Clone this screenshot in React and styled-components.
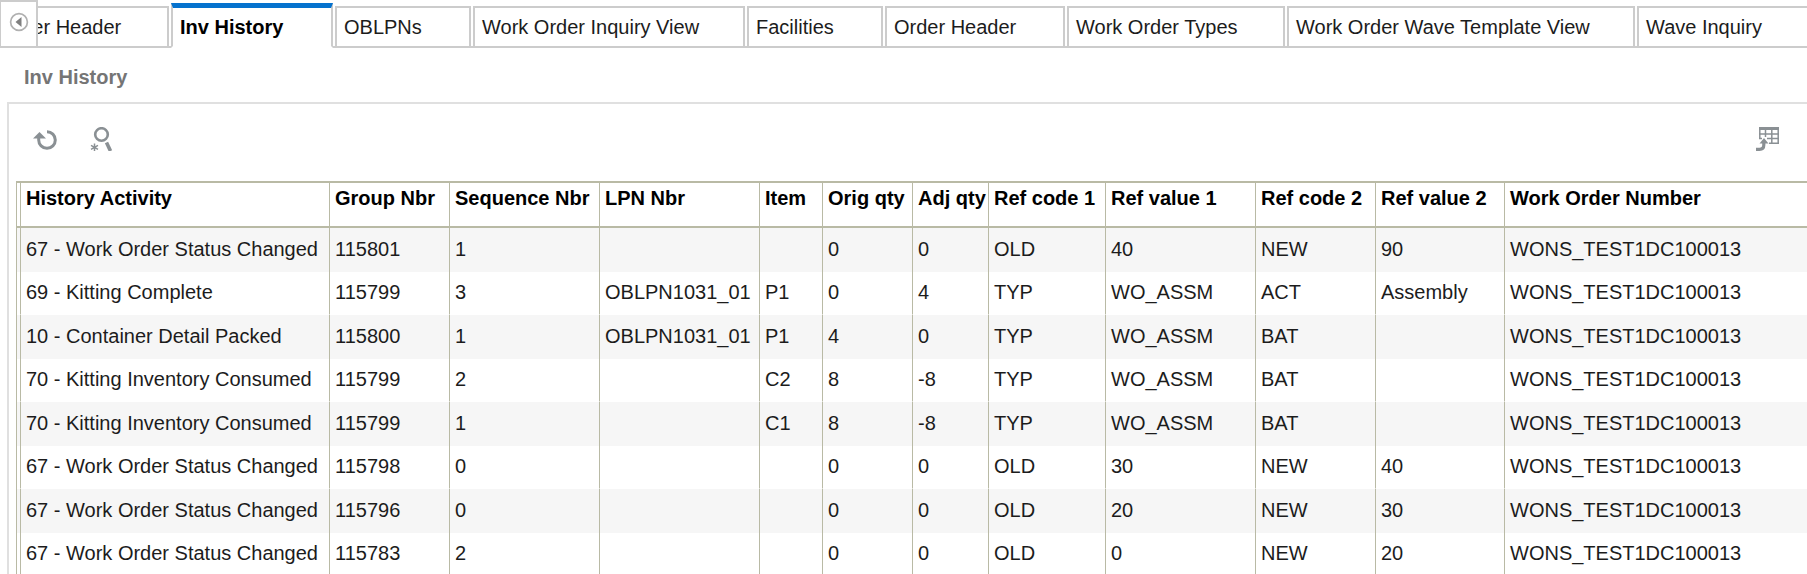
import React, {useState} from "react";
import styled, {createGlobalStyle} from "styled-components";

const GlobalStyle = createGlobalStyle`
  * {
    box-sizing: border-box;
  }

  body {
    margin: 0;
    background-color: #ffffff;
    color: #1c1c1c;
    font-family: "Liberation Sans", Arial, sans-serif;
    font-size: 20px;
  }
`;

const PageWrapper = styled.div`
  display: flex;
  flex-direction: column;
  height: 100vh;
  overflow: hidden;
`;

const TabBar = styled.div`
  display: flex;
  flex: none;
  height: 48px;
  box-shadow: inset 0 -2px #cccccc;
`;

const ScrollButton = styled.button`
  display: flex;
  flex: none;
  justify-content: center;
  width: 38px;
  padding: 10px 0 0;
  border: 2px solid #cccccc;
  border-left-width: 1px;
  background-color: #ffffff;
`;

const TabList = styled.div`
  display: flex;
  flex: 1;
  align-items: flex-end;
  gap: 2px;
  min-width: 0;
  overflow: hidden;
`;

const Tab = styled.button`
  flex: none;
  width: ${props => props.$width}px;
  height: ${props => props.$active ? 45 : 42}px;
  padding: 0 7px 1px;
  border: 2px solid #cccccc;
  border-top: ${props => props.$active ? "5px solid #0572ce" : "2px solid #cccccc"};
  border-bottom-color: ${props => props.$active ? "#ffffff" : "#cccccc"};
  background-color: #ffffff;
  color: ${props => props.$active ? "#000000" : "#1c1c1c"};
  font-family: inherit;
  font-size: 20px;
  font-weight: ${props => props.$active ? 700 : 400};
  line-height: 24px;
  text-align: left;
  white-space: nowrap;

  &:first-child {
    margin-left: -48px;
  }
`;

const TitleHeading = styled.h1`
  flex: none;
  margin: 0;
  padding: 17px 24px 13px;
  color: #757575;
  font-size: 20px;
  font-weight: 700;
  line-height: 24px;
`;

const Panel = styled.main`
  flex: 1;
  margin-left: 7px;
  padding-left: 7px;
  border-top: 2px solid #e0e0e0;
  border-left: 2px solid #e0e0e0;
`;

const Toolbar = styled.div`
  display: flex;
  align-items: center;
  gap: 33px;
  padding: 23px 27px 30px 17px;
`;

const ToolButton = styled.button`
  display: flex;
  padding: 0;
  border: 0;
  background: none;
  color: #8a9094;

  &:last-child {
    margin-left: auto;
  }
`;

const HistoryTable = styled.table`
  width: 100%;
  border-collapse: separate;
  border-spacing: 0;
  border-left: 1px solid #b9baa5;
  table-layout: fixed;
`;

const Col = styled.col`
  width: ${props => props.$width ? `${props.$width}px` : "auto"};
`;

const HeaderTh = styled.th`
  height: 47px;
  padding: 3px 0 0 5px;
  border-top: 2px solid #b9baa5;
  border-bottom: 2px solid #b9baa5;
  border-left: 1px solid #b9baa5;
  color: #000000;
  font-weight: 700;
  line-height: 24px;
  text-align: left;
  vertical-align: top;
  white-space: nowrap;
`;

const HistoryTd = styled.td`
  padding: 0 0 2px 5px;
  border-left: 1px solid #b9baa5;
  line-height: 24px;
  white-space: nowrap;
`;

const EdgeTd = styled.td`
  padding: 0;
`;

const EdgeHeaderTd = styled.td`
  padding: 0;
  border-top: 2px solid #b9baa5;
  border-bottom: 2px solid #b9baa5;
`;

const HistoryRow = styled.tr`
  height: 44px;
  background-color: #f6f6f6;

  &:nth-child(even) {
    height: 43px;
    background-color: #ffffff;
  }

  &:nth-child(even) td {
    border-bottom: 1px solid #ffffff;
  }
`;

const tabs = [
  {id: "header", label: "Order Header", width: 179},
  {id: "history", label: "Inv History", width: 162},
  {id: "oblpns", label: "OBLPNs", width: 136},
  {id: "inquiry", label: "Work Order Inquiry View", width: 272},
  {id: "facilities", label: "Facilities", width: 136},
  {id: "orders", label: "Order Header", width: 180},
  {id: "types", label: "Work Order Types", width: 218},
  {id: "template", label: "Work Order Wave Template View", width: 348},
  {id: "wave", label: "Wave Inquiry", width: 180},
];

const columns = [
  {key: "activity", label: "History Activity", width: 309},
  {key: "group", label: "Group Nbr", width: 120},
  {key: "sequence", label: "Sequence Nbr", width: 150},
  {key: "lpn", label: "LPN Nbr", width: 160},
  {key: "item", label: "Item", width: 63},
  {key: "orig", label: "Orig qty", width: 90},
  {key: "adj", label: "Adj qty", width: 76},
  {key: "code1", label: "Ref code 1", width: 117},
  {key: "value1", label: "Ref value 1", width: 150},
  {key: "code2", label: "Ref code 2", width: 120},
  {key: "value2", label: "Ref value 2", width: 129},
  {key: "order", label: "Work Order Number"},
];

const rows = [
  ["67 - Work Order Status Changed", "115801", "1", "", "", "0", "0", "OLD", "40", "NEW", "90", "WONS_TEST1DC100013"],
  ["69 - Kitting Complete", "115799", "3", "OBLPN1031_01", "P1", "0", "4", "TYP", "WO_ASSM", "ACT", "Assembly", "WONS_TEST1DC100013"],
  ["10 - Container Detail Packed", "115800", "1", "OBLPN1031_01", "P1", "4", "0", "TYP", "WO_ASSM", "BAT", "", "WONS_TEST1DC100013"],
  ["70 - Kitting Inventory Consumed", "115799", "2", "", "C2", "8", "-8", "TYP", "WO_ASSM", "BAT", "", "WONS_TEST1DC100013"],
  ["70 - Kitting Inventory Consumed", "115799", "1", "", "C1", "8", "-8", "TYP", "WO_ASSM", "BAT", "", "WONS_TEST1DC100013"],
  ["67 - Work Order Status Changed", "115798", "0", "", "", "0", "0", "OLD", "30", "NEW", "40", "WONS_TEST1DC100013"],
  ["67 - Work Order Status Changed", "115796", "0", "", "", "0", "0", "OLD", "20", "NEW", "30", "WONS_TEST1DC100013"],
  ["67 - Work Order Status Changed", "115783", "2", "", "", "0", "0", "OLD", "0", "NEW", "20", "WONS_TEST1DC100013"],
];

const PreviousIcon = () => (
  <svg width="20" height="20" viewBox="0 0 20 20" fill="none" aria-hidden="true">
    <circle cx="10" cy="10" r="8.4" stroke="#b0b0b0" strokeWidth="1.7"/>
    <path d="M12.5 5v10L6.5 10z" fill="#808080"/>
  </svg>
);

const RefreshIcon = () => (
  <svg width="24" height="24" viewBox="0 0 24 24" fill="none" aria-hidden="true">
    <path d="M14 4.7A8.3 8.3 0 1 1 5.7 13v-2" stroke="currentColor" strokeWidth="3"/>
    <path d="M0 11.5 6.5 5l6.5 6.5z" fill="currentColor"/>
  </svg>
);

const SearchIcon = () => (
  <svg width="24" height="24" viewBox="0 0 24 24" fill="none" aria-hidden="true">
    <circle cx="11.5" cy="7.5" r="6.3" stroke="currentColor" strokeWidth="2.6"/>
    <path d="M16.5 15.5 20.5 24" stroke="currentColor" strokeWidth="3.6"/>
    <path d="M4.5 16.5v7.5M1 18.3l7 4M8 18.3l-7 4" stroke="currentColor" strokeWidth="1.5"/>
  </svg>
);

const DetachIcon = () => (
  <svg width="24" height="24" viewBox="0 0 24 24" fill="none" aria-hidden="true">
    <path d="M3 0h20v3H3z" fill="currentColor"/>
    <path d="M3.8 2v9M9.5 2v8M15.8 2v14M22.2 2v15M3 7h20M3 11.5h3M11 11.5h12M13 16.2h10" stroke="currentColor" strokeWidth="1.5"/>
    <path d="M0 22.3h3.5c3 0 4.3-1.5 4.3-4.3v-2" stroke="currentColor" strokeWidth="3.2"/>
    <path d="M3.5 16.5 8 11l4.5 5.5z" fill="currentColor"/>
  </svg>
);

const App = () => {
  const [activeTab, setActiveTab] = useState("history");
  return (
    <PageWrapper>
      <GlobalStyle/>
      <TabBar>
        <ScrollButton type="button" aria-label="Previous tabs"><PreviousIcon/></ScrollButton>
        <TabList role="tablist">
          {tabs.map(tab => (
            <Tab
              key={tab.id}
              type="button"
              role="tab"
              aria-selected={tab.id === activeTab}
              $active={tab.id === activeTab}
              $width={tab.width}
              onClick={() => setActiveTab(tab.id)}
            >
              {tab.label}
            </Tab>
          ))}
        </TabList>
      </TabBar>
      <TitleHeading>Inv History</TitleHeading>
      <Panel>
        <Toolbar>
          <ToolButton type="button" aria-label="Refresh"><RefreshIcon/></ToolButton>
          <ToolButton type="button" aria-label="Search"><SearchIcon/></ToolButton>
          <ToolButton type="button" aria-label="Detach"><DetachIcon/></ToolButton>
        </Toolbar>
        <HistoryTable>
          <colgroup>
            <Col $width={3}/>
            {columns.map(column => <Col key={column.key} $width={column.width}/>)}
          </colgroup>
          <thead>
          <tr>
            <EdgeHeaderTd/>
            {columns.map(column => (
              <HeaderTh key={column.key} scope="col">{column.label}</HeaderTh>
            ))}
          </tr>
          </thead>
          <tbody>
          {rows.map((row, index) => (
            <HistoryRow key={index}>
              <EdgeTd/>
              {row.map((value, i) => (
                <HistoryTd key={columns[i].key}>{value}</HistoryTd>
              ))}
            </HistoryRow>
          ))}
          </tbody>
        </HistoryTable>
      </Panel>
    </PageWrapper>
  )
};

export default App;
